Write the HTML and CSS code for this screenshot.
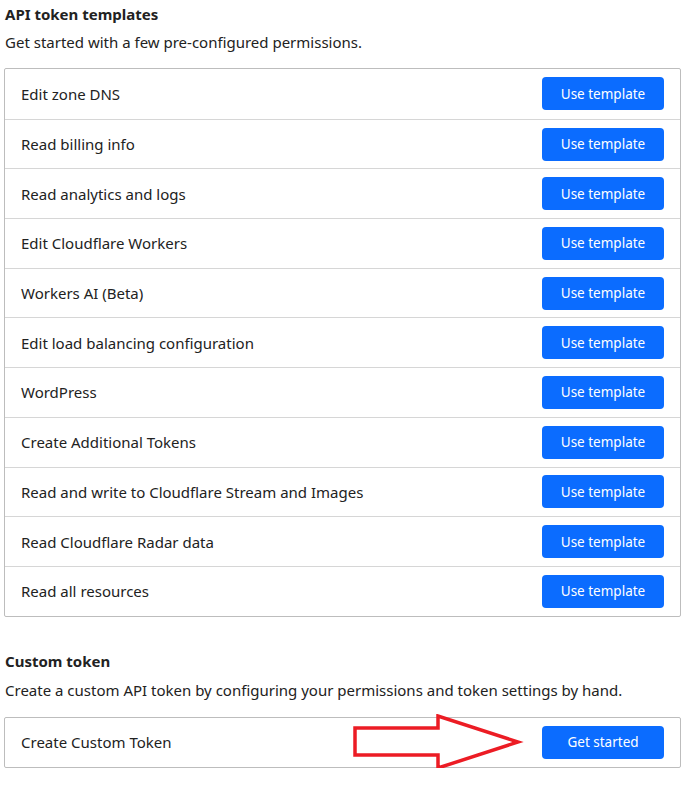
FILE: index.html
```html
<!DOCTYPE html>
<html lang="en">
<head>
<meta charset="utf-8">
<title>API tokens</title>
<link rel="stylesheet" href="styles.css">
</head>
<body>
<div class="page">
  <section class="section">
    <h2 class="title">API token templates</h2>
    <p class="desc">Get started with a few pre-configured permissions.</p>
    <div class="list">
      <div class="row"><span class="label">Edit zone DNS</span><button class="btn">Use template</button></div>
      <div class="row"><span class="label">Read billing info</span><button class="btn">Use template</button></div>
      <div class="row"><span class="label">Read analytics and logs</span><button class="btn">Use template</button></div>
      <div class="row"><span class="label">Edit Cloudflare Workers</span><button class="btn">Use template</button></div>
      <div class="row"><span class="label">Workers AI (Beta)</span><button class="btn">Use template</button></div>
      <div class="row"><span class="label">Edit load balancing configuration</span><button class="btn">Use template</button></div>
      <div class="row"><span class="label">WordPress</span><button class="btn">Use template</button></div>
      <div class="row"><span class="label">Create Additional Tokens</span><button class="btn">Use template</button></div>
      <div class="row"><span class="label">Read and write to Cloudflare Stream and Images</span><button class="btn">Use template</button></div>
      <div class="row"><span class="label">Read Cloudflare Radar data</span><button class="btn">Use template</button></div>
      <div class="row"><span class="label">Read all resources</span><button class="btn">Use template</button></div>
    </div>
  </section>
  <section class="section custom">
    <h2 class="title">Custom token</h2>
    <p class="desc custom-desc">Create a custom API token by configuring your permissions and token settings by hand.</p>
    <div class="list custom-list">
      <div class="row"><span class="label">Create Custom Token</span><button class="btn">Get started</button></div>
      <svg class="arrow" width="180" height="60" viewBox="0 0 180 60" aria-hidden="true">
        <polygon points="2,14 85,14 85,2 165,28 85,54 85,41 2,41" fill="none" stroke="#ec1c24" stroke-width="3.5" stroke-linejoin="miter"/>
      </svg>
    </div>
  </section>
</div>
</body>
</html>
```
FILE: styles.css
```css
* { box-sizing: border-box; }
html, body { margin: 0; padding: 0; background: #fff; }
body {
  font-family: "Noto Sans", "Open Sans", "Liberation Sans", sans-serif;
  color: #222;
}
.page {
  width: 677px;
  margin-left: 4px;
  padding-top: 4px;
}
.title {
  margin: 0;
  padding-left: 1px;
  font-size: 15px;
  font-weight: 700;
  line-height: 20px;
  color: #222;
}
.desc {
  margin: 8px 0 0;
  padding-left: 1px;
  font-size: 15px;
  line-height: 20px;
  color: #222;
}
.custom-desc { margin-top: 9px; }
.list {
  margin-top: 16px;
  border: 1px solid #bdbdbd;
  border-radius: 2px;
}
.row {
  height: 49.7px;
  display: flex;
  align-items: center;
  justify-content: space-between;
  padding: 0 16px 0 16px;
  border-top: 1px solid #d6d6d6;
}
.row:first-child { border-top: none; }
.label {
  font-size: 15px;
  color: #222;
}
.btn {
  width: 122px;
  height: 33px;
  border: none;
  border-radius: 4px;
  background: #0b6cff;
  color: #fff;
  font-family: inherit;
  font-size: 13.5px;
  cursor: pointer;
}
.custom { margin-top: 34px; }
.custom-list { position: relative; margin-top: 17px; }
.arrow {
  position: absolute;
  left: 348px;
  top: -4px;
}
```
